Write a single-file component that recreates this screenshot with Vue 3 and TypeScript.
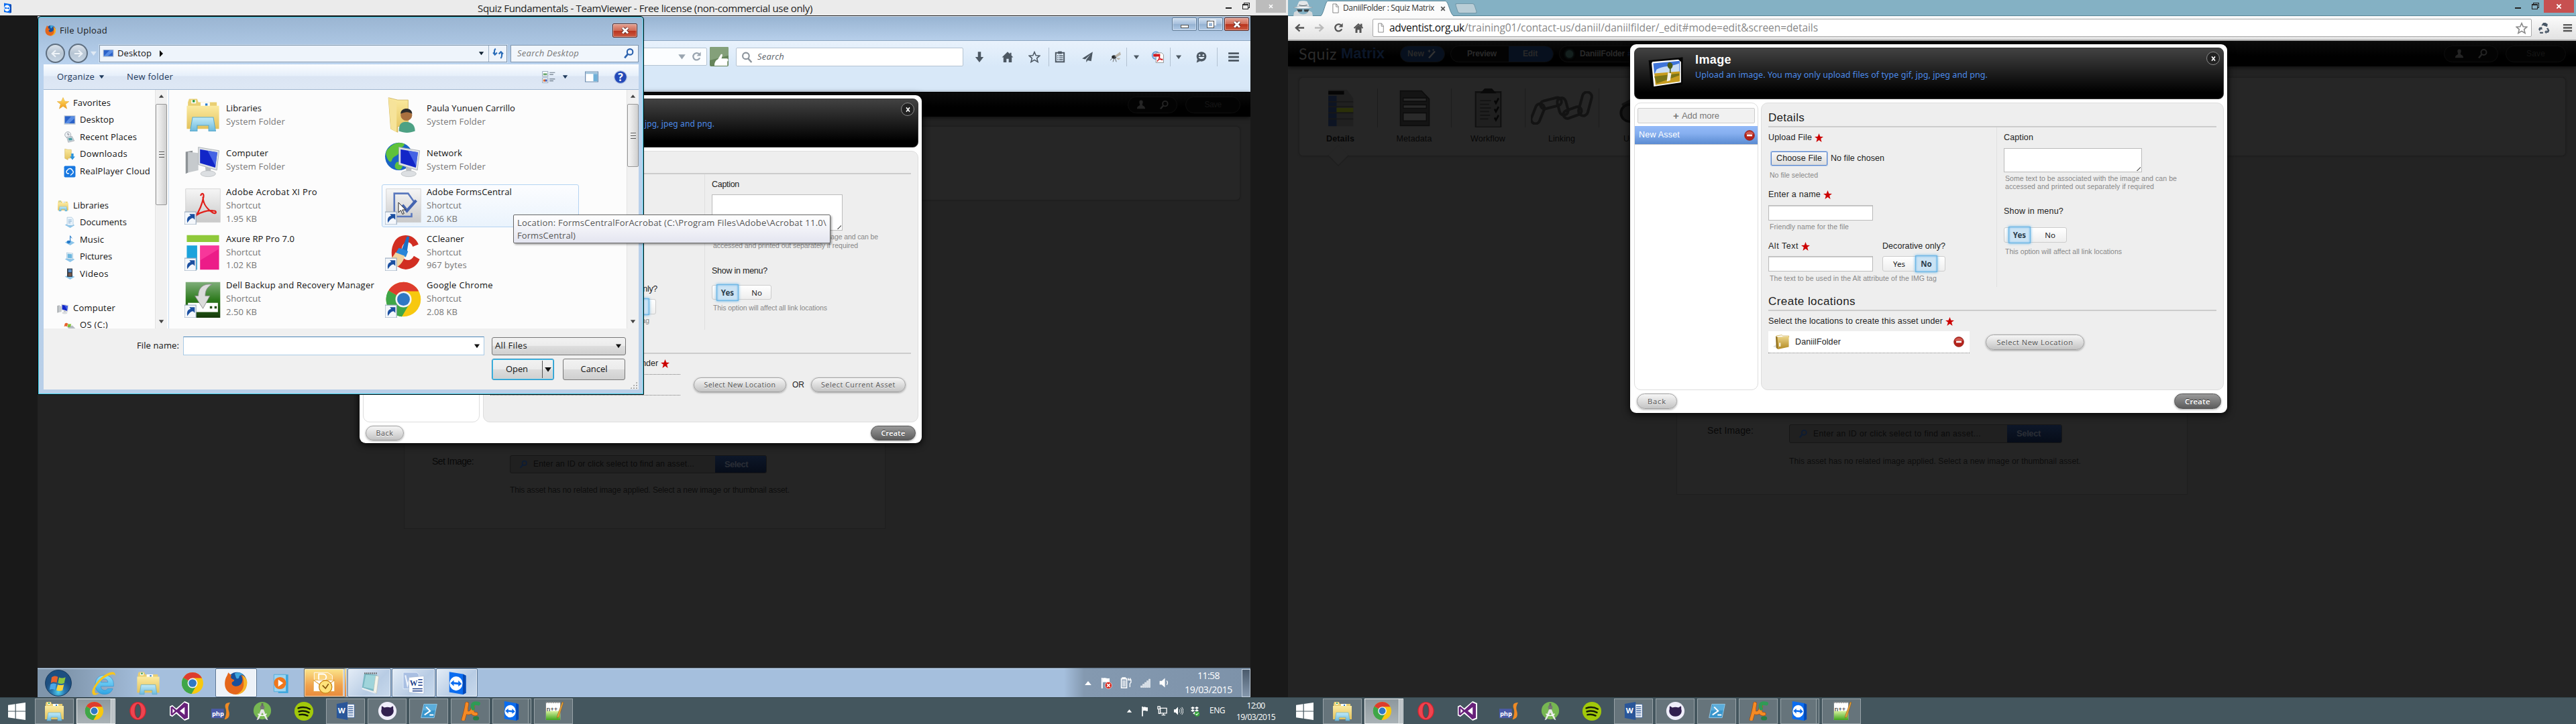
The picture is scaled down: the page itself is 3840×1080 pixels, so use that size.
<script setup lang="ts">
import { h } from 'vue'

const shortcut = '<rect x="0" y="21" width="10" height="11" fill="#f4f7fb" stroke="#8fa3b8" stroke-width=".6"/><path d="M2.500 30.500c-.8-3.600.4-5.800 2.800-6l-1-1.700h4.600v5l-1.500-1.500c-2 .2-3.200 1.500-4.900 4.200z" fill="#1b4fa0"/>'
const chromeArt = '<circle cx="16" cy="16" r="15" fill="#f7c80f"/><path d="M16 16L3 8.500A15 15 0 0 1 29.200 9H16z" fill="#dd3c2e"/><path d="M3 8.500A15 15 0 0 0 14.500 31L20.500 20.500 16 16z" fill="#3fa648"/><path d="M3 8.500L9.500 19.500 16 23l5-3-6.500 11A15 15 0 0 1 3 8.500z" fill="#3fa648"/><circle cx="16" cy="16" r="7" fill="#f4f4f4"/><circle cx="16" cy="16" r="5.500" fill="#2f78c4"/>'
const tvArt = '<path d="M6 1l18 3 4 2v23l-4 2-18-3z" fill="#0a6cf0"/><path d="M24 4l4 2v23l-4 2z" fill="#0549b5"/><ellipse cx="15" cy="16.500" rx="8.500" ry="9.500" fill="#fff"/><path d="M7.500 16l4.500-4v2.700l6 .6V12.500l4.500 4.500-4.500 3.500v-2.500l-6-.6V20z" fill="#0a6cf0"/>'
const explorerArt = '<path d="M3 5l1-3h7l1 3h16v4H3z" fill="#e9cf73"/><path d="M6 3h4v3H6zM14 5h8v4h-8z" fill="#fff"/><path d="M7 3h2v2H7z" fill="#2f9a3c"/><path d="M18 6h2v2h-2z" fill="#2a7fd0"/><path d="M2 8h28v20H2z" fill="url(#gFolder)"/><path d="M7 18h18l2 12h-6v-5H11v5H5z" fill="url(#gAqua)" stroke="#5aa9cd" stroke-width=".6"/>'
const pcScreen = '<path d="M12 5l18 3-2 17-16-5z" fill="#dfe3e6" stroke="#a9adb2" stroke-width=".5"/><path d="M13.500 6.800l15 2.600-1.800 13.300-13.200-4z" fill="#1226c8"/><path d="M20 8l8.500 1.400-1.600 12z" fill="#5b7df0" opacity=".7"/><path d="M18 22l5 1.500-.5 3.500h-4z" fill="#b9bdc1"/><ellipse cx="20.500" cy="28" rx="6.500" ry="2.600" fill="#dcdfe2" stroke="#b3b7bb" stroke-width=".4"/>'
const star = '<path d="M16 0l4.500 11.500L32 12l-9.500 7.200L26 32l-10-7.400L6 32l3.500-12.800L0 12l11.500-.5z" fill="currentColor"/>'
const icons: Record<string, string> = {
  chrome: chromeArt,
  tv: tvArt,
  explorer: explorerArt,
  star,
  ex: '<path d="M7 7l18 18M25 7L7 25" stroke="currentColor" stroke-width="5.500"/>',
  exr: '<path d="M7 6l18 20M25 6L7 26" stroke="#4a2020" stroke-width="11"/><path d="M7 6l18 20M25 6L7 26" stroke="#fff" stroke-width="7"/>',
  fav: '<path d="M16 1l4.500 10 11 .5-9 7 3.500 12L16 24 6 30.500l3.500-12-9-7 11-.5z" fill="url(#gStar)" stroke="#e3a62c" stroke-width="1"/>',
  ff: '<circle cx="17" cy="14.500" r="13" fill="#174f9b"/><path d="M14 3c4-2 9-1 12 2-3-.5-6 1-6 3s-3 3-4 1z" fill="#3fa5dc"/><path d="M4 6c1-2 1-3 2-4 1 2 3 3 4 3-2 3-1 5 2 6 2 .5 2 2 0 3-3 1-2 5 2 6 5 1 9-2 10-6 1-3 0-7-2-9 5 2 9 7 8 13-1 8-7 13-14 13C7 31 1 25 1 17c0-4 1-8 3-11z" fill="#e4661b"/><path d="M24 5c5 3 8 8 6 14-1 7-7 12-14 12 6-2 10-7 10-13 0-5 0-9-2-13z" fill="#f6b42a"/>',
  ie: '<path d="M16.500 6C9.500 6 5 11 5 18s5 12 12 12c5 0 8.500-2.500 10-7h-6.500c-1 1.500-2 2-3.500 2-3 0-5-2-5-5h16C29 11.500 24 6 16.500 6zm-4.400 9c.4-2.600 2-4.200 4.500-4.200s4.200 1.600 4.400 4.200z" fill="url(#gIe)" stroke="#2a8fd0" stroke-width=".5"/><path d="M2 30C-2 26 8 10 20 4c6-3 11-3 10 3-1-3-5-2-9 0C12 11 2 23 5 28c1 1.500 3 1 5 0-3 3-6 4-8 2z" fill="#f8c51c"/>',
  wmp: '<path d="M12 4h14v26l-14 0z" fill="#3aa6de"/><path d="M6 4h17v24H6z" fill="#9bd5f2" stroke="#4aa9d8" stroke-width=".8"/><circle cx="14.500" cy="16" r="8.500" fill="#f0761c"/><path d="M12 11v10l7-5z" fill="#fff"/>',
  outlook: '<path d="M3 2h18l6 4v8H3z" fill="#fbd37c" stroke="#fff" stroke-width=".8"/><path d="M9 4h6a4 4 0 0 1 0 8H9z" fill="none" stroke="#fff" stroke-width="1.600"/><path d="M2 12h28v15H2z" fill="#fff" stroke="#e2a33c" stroke-width=".7"/><path d="M2 12l14 10 14-10" fill="none" stroke="#e2a33c"/><circle cx="18" cy="21" r="8.500" fill="#ffe27a" stroke="#c98516" stroke-width="1.200"/><path d="M14 19l4 4 4-6" fill="none" stroke="#8a5a10" stroke-width="1.600"/>',
  notepad: '<path d="M9 3l17 2-4 22-16-5z" fill="#79b7c2"/><path d="M11 5l14 1-4 18-13-3z" fill="#a9dbe0" opacity=".8"/><path d="M24 6l4 1-3 23-4-3z" fill="#f4f4ea" stroke="#b4b4a4" stroke-width=".4"/><path d="M9 3h17" stroke="#666" stroke-width="2" stroke-dasharray="1.500 1"/><path d="M6 22l16 5 2 3-18-6z" fill="#e9eef0"/>',
  word10: '<path d="M1 1h19l3 3v20H1z" fill="#a9bfe2" stroke="#e6eefa" stroke-width=".8"/><path d="M4 5l3 14 3-9 2 5" fill="none" stroke="#eef3fb" stroke-width="2"/><path d="M9 8l21-2v25L9 29z" fill="#fff" stroke="#9fb3cf" stroke-width=".6"/><text x="10" y="20" font-family="Liberation Serif,serif" font-weight="700" font-size="11" fill="#1d3f8c">W</text><path d="M22 11h6M22 15h6M22 19h6M14 24h14M14 27h14" stroke="#1d3f8c" stroke-width="1.500"/>',
  word13: '<path d="M14 5h16v22H14z" fill="#fff" stroke="#2a5699" stroke-width=".8"/><path d="M20 9h8M20 12h8M20 15h8M20 18h8M20 21h8M20 24h8" stroke="#2a5699" stroke-width="1.300"/><path d="M1 4.500L19 1v30L1 27.500z" fill="#2a5699"/><text x="3" y="20" font-family="Open Sans,sans-serif" font-weight="700" font-size="12.500" fill="#fff">W</text>',
  opera: '<ellipse cx="16" cy="16" rx="13.500" ry="15" fill="#d8222c"/><ellipse cx="16" cy="16" rx="12" ry="13.800" fill="#ef4450"/><ellipse cx="16" cy="16" rx="5" ry="11.500" fill="#44565e" stroke="#b81822"/>',
  vs: '<path d="M24 1l7 3v24l-7 3-13-11-6 5-4-2V9l4-2 6 5z" fill="#fff"/><path d="M23.500 3l5.500 2.300v21.400L23.500 29 11.500 17.500 5 23l-2.500-1.200V10.200L5 9l6.500 5.500zM5.500 12.500v7L9 16zM24 10l-7.500 6 7.500 6z" fill="#68217a" fill-rule="evenodd"/>',
  php: '<path d="M1 12h20v15H1z" fill="#4a5aa8"/><text x="2" y="23" font-family="Open Sans,sans-serif" font-weight="700" font-size="10" fill="#fff">php</text><path d="M31 2c-8 0-9 4-7 10 1.500 5 1 10-2 17 7-1 9-6 7-13-1-4-2-8 2-14z" fill="#f08a24"/>',
  android: '<circle cx="16" cy="15" r="14" fill="#77b752"/><circle cx="16" cy="10" r="3.500" fill="#777"/><path d="M14.500 3h3v5h-3z" fill="#666"/><path d="M14 13L7 30l3-1 6-11 6 11 3 1-7-17z" fill="#e6e6e6"/><path d="M9 20c4 4 10 4 14 0" stroke="#fff" stroke-width="1.500" fill="none"/>',
  spotify: '<circle cx="16" cy="16" r="15" fill="#a2c90a"/><path d="M7 11c6-2 13-1.500 18.500 1.500M8 16.500c5-1.500 11-1 16 1.500M9 21.500c4.500-1 9-.5 13 1.500" stroke="#141a06" stroke-width="2.600" stroke-linecap="round" fill="none"/>',
  github: '<circle cx="16" cy="16" r="15" fill="#efeefa"/><path d="M7 8l4 2.500c3-1 7-1 10 0L25 8c.8 2 .8 3.600.5 4.600C28 18 24 25 16 25S4 18 6.500 12.600C6.200 11.600 6.200 10 7 8z" fill="#31204f"/>',
  ps: '<path d="M7 4h23l-5 24H2z" fill="#3a96cc" stroke="#9fd2f0"/><path d="M9 4h21l-2 11H5z" fill="#7cc3ea" opacity=".5"/><path d="M11 9l7 7-10 7M17 23h7" fill="none" stroke="#fff" stroke-width="2.400"/>',
  mu: '<path d="M10 4C9 12 7 20 4 30M9 13c-2 9 9 9 11-3M20 8c-2 8-2 14 5 13" fill="none" stroke="#a34a0c" stroke-width="6.500" stroke-linecap="round"/><path d="M10 4C9 12 7 20 4 30M9 13c-2 9 9 9 11-3M20 8c-2 8-2 14 5 13" fill="none" stroke="#f58a25" stroke-width="5" stroke-linecap="round"/><path d="M20 12c-3-8 3-10 9-8" fill="none" stroke="#2f9a55" stroke-width="6" stroke-linecap="round"/><ellipse cx="25" cy="28" rx="5" ry="3.500" fill="#2a7d46"/>',
  npp: '<path d="M4 3h22v27H4z" fill="#fff"/><path d="M4 16h22v14H4z" fill="url(#gGreen)"/><path d="M4 3h22" stroke="#999" stroke-width="2" stroke-dasharray="2 1.500"/><text x="5" y="17" font-family="Liberation Sans,sans-serif" font-size="10" fill="#111">n++</text><path d="M29 2l2 1-7 22-3 2 .5-4z" fill="#e8a33a" stroke="#7a4c14" stroke-width=".5"/>',
  win8: '<path d="M0 4.500L13 2.700v12.600H0zM14.500 2.500L32 0v15.300H14.500zM0 16.700h13v12.600L0 27.500zM14.500 16.700H32V32l-17.500-2.500z" fill="#fff"/>',
  orb: '<circle cx="16" cy="16" r="15.500" fill="url(#gOrb)" stroke="#16395c" stroke-width=".8"/><path d="M8 9c3-2 5-1.500 7.500-.5L14 15.500C11.500 14.500 9.500 14.500 7 16z" fill="#e8622b"/><path d="M16.800 9.200c2.700 1.200 5 1 7.700-.2L23 16c-2.600 1.200-5 1-7.500 0z" fill="#8cc63e"/><path d="M6.600 17.500c2.500-1.500 4.600-1.300 7-.4L12 24c-2.300-1-4.300-1-6.500 0z" fill="#4ba7e8"/><path d="M15.200 17.700c2.600 1 4.700 1.100 7.400 0L21 24.500c-2.600 1.200-5 1-7.400 0z" fill="#fbd33c"/>',
  libraries: explorerArt,
  user: '<path d="M3 1l8 2h9v22l-9 1v5l-6-3z" fill="url(#gFolder)" stroke="#cdb25e" stroke-width=".5"/><path d="M3 1l7 4v26l-5-3z" fill="#f6e39a"/><circle cx="18.500" cy="16" r="5" fill="#a9703f"/><path d="M13.500 15c0-6 10-6 10 0-3-2-6-2-10 0z" fill="#2c2c2c"/><path d="M12 30c0-6 2-8 6-8s8 2 8 8c-5 1.800-9 1.800-14 0z" fill="#4da184"/>',
  computer: '<path d="M1 9l6-1v17l-6 3z" fill="#8d9296"/><path d="M3 9l9 1v15l-9 2z" fill="#c6cacd"/>' + pcScreen,
  network: '<circle cx="12" cy="13" r="12" fill="#1a63c4"/><path d="M5 4c5-4 9-3 12-2-1 4-5 3-5 7s-5 3-6 7-4 0-5-4 2-6 4-8zM10 18c3-1 6 1 5 4s-3 3-5 2-2-4 0-6z" fill="#5fc23b"/>' + pcScreen,
  acrobat: '<path d="M1 1h30v29H1z" fill="url(#gPaper)" stroke="#d0d0d0" stroke-width=".5"/><path d="M14 7c1-3 3-2 2.500 1C15.500 14 13 20 9 26M16 8c0 6 4 11 9 14 3 1 3-2 0-2-5-.5-11 1-15 4" stroke="#e0201b" stroke-width="1.300" fill="none"/>' + shortcut,
  forms: '<path d="M1 1h30v29H1z" fill="url(#gPaper)" stroke="#d0d0d0" stroke-width=".5"/><path d="M8 23V5h12l5 7M9 25h14v-3" stroke="#5a78bd" stroke-width="1.500" fill="none"/><path d="M15 15l4 5 8-9" stroke="#4565b0" stroke-width="2.500" fill="none"/>' + shortcut,
  axure: '<path d="M2 1h28v6H2z" fill="#8fc93a"/><path d="M2 10h9v21H2z" fill="#1ba3dc"/><path d="M13.500 10H30v21H13.500z" fill="#ec1c88"/><path d="M13.500 10H30v3l-16.500 10z" fill="#ff4aa6" opacity=".6"/>' + shortcut,
  ccleaner: '<path d="M29 9C25-1 12-1 8 7c-4 7-3 18 4 22 6 4 15 1 18-7l-5-3c-2 4-6 5-9 2-3-4-2-11 1-13 3-2 6 0 7 3z" fill="#d12e22"/><path d="M19 2l2 .5-2 13-5-1z" fill="#1a6fc4"/><path d="M12 12l8 3-2 5-9-3z" fill="#2a86d8"/><path d="M9 16l8 3c-1 6-6 10-10 11L1 24c4-2 6-4 8-8z" fill="#f0d3a0"/>' + shortcut,
  dell: '<path d="M1 1h30v31H1z" fill="url(#gDell)"/><path d="M3 19h26v8H3z" fill="#fff"/><path d="M22 22h2v2h-2zM26 22h2v2h-2z" fill="#234d10"/><path d="M24 3c-8-1-12 3-12 10H9l7 11 6-11h-4c0-5 2-8 6-10z" fill="#dcdcdc" stroke="#8b8b8b" stroke-width=".5"/>' + shortcut,
  gchrome: chromeArt + shortcut,
  desktopS: '<path d="M1 4h30v24H1z" fill="#bfc9d4"/><path d="M3 6h26v19H3z" fill="#2a62c9"/><path d="M3 25L20 6h9v5L14 25z" fill="#6ea0ef" opacity=".7"/>',
  recent: '<circle cx="11" cy="9" r="8" fill="#eef1f4" stroke="#9aa4ad" stroke-width="1.500"/><path d="M11 4v5h4" stroke="#667" stroke-width="1.500" fill="none"/><path d="M8 15l14-2 6 12-16 4z" fill="#c9d2da" stroke="#8b949c"/><path d="M12 18l9-1 2 6-9 1z" fill="#4d9ea5"/>',
  down: '<path d="M3 2l8 2h9v22l-9 1v4l-8-4z" fill="url(#gFolder)" stroke="#cdb25e"/><path d="M20 14h6v8h4l-7 9-7-9h4z" fill="#2a93dd"/>',
  real: '<rect x="1" y="1" width="30" height="30" rx="3" fill="#1878e0"/><path d="M14 21h-4a5 5 0 0 1 0-9 7 7 0 0 1 13 1 5 5 0 0 1-1 9l-4 4" stroke="#fff" stroke-width="2.500" fill="none"/>',
  doc: '<path d="M3 22l14-5 12 6-12 7z" fill="#8cc5ea"/><path d="M9 2h12l4 5v17l-16-1z" fill="#e9f3fb" stroke="#8fb4cf"/><path d="M12 9h9M12 13h9M12 17h6" stroke="#6fa0c8" stroke-width="1.500"/>',
  music: '<path d="M3 22l14-5 12 6-12 7z" fill="#8cc5ea"/><path d="M16 2c1 5 7 5 6 11-1-3-3-4-4-4v12a5 4 0 1 1-2-3z" fill="#2479c9"/>',
  pic: '<path d="M3 22l14-5 12 6-12 7z" fill="#8cc5ea"/><path d="M8 5l16 2v16L8 21z" fill="#eaf5fc" stroke="#8fb4cf"/><path d="M10 8l12 1.500v11L10 19z" fill="#6db6de"/>',
  vid: '<path d="M3 22l14-5 12 6-12 7z" fill="#8cc5ea"/><path d="M9 1h14v22H9z" fill="#2c3540"/><path d="M12 3h9v8h-9z" fill="#5a8fc9"/><path d="M12 13h9v8h-9z" fill="#7a5a4a"/>',
  drive: '<path d="M9 20l14-3 8 8-14 6z" fill="#b5bcc2"/><path d="M3 12c3-3 6-2 8 0l-2 8c-3-2-5-2-8 0z" fill="#e8622b"/><path d="M12 12c3 2 6 2 8 0l-2 8c-3 2-6 2-8 0z" fill="#7fbf3a"/>',
  search: '<circle cx="19" cy="12" r="8" fill="none" stroke="currentColor" stroke-width="4"/><path d="M13 18L4 29" stroke="currentColor" stroke-width="5"/>',
  searchL: '<circle cx="13" cy="12" r="9" fill="none" stroke="currentColor" stroke-width="4"/><path d="M19 19l10 11" stroke="currentColor" stroke-width="4.500"/>',
  refresh: '<path d="M9 3C5 6 5 12 6 18M2 14l5 6 6-6" fill="none" stroke="#2a6cb8" stroke-width="4"/><path d="M23 30c4-3 4-9 3-15M18 18l6-6 6 6" fill="none" stroke="#2a6cb8" stroke-width="4"/>',
  views: '<path d="M1 1h13v13H1zM1 18h13v13H1z" fill="#fff" stroke="#8aa0b4" stroke-width="1.500"/><path d="M3 6h9v5H3z" fill="#69a66f"/><path d="M3 22h5v6H3z" fill="#d06a3a"/><path d="M8 22h4v6H8z" fill="#3a5ec0"/><path d="M18 4h13M18 9h9M18 21h13M18 26h9" stroke="#6c7a88" stroke-width="2"/>',
  pane: '<path d="M1 2h30v28H1z" fill="#fff" stroke="#6f8db0" stroke-width="2"/><path d="M2 3h28v5H2z" fill="#9fc3dc"/><path d="M20 8h10v21H20z" fill="#6fb0d8"/>',
  help: '<circle cx="16" cy="16" r="15" fill="#2349b8" stroke="#b8c6e4" stroke-width="2"/><text x="16" y="25" text-anchor="middle" font-family="Open Sans,sans-serif" font-weight="700" font-size="25" fill="#fff">?</text>',
  dl: '<path d="M12 2h8v14h7L16 30 5 16h7z" fill="#4d5863"/>',
  home: '<path d="M16 2L1 17h4v13h8v-9h6v9h8V17h4l-5-5V5h-4v3z" fill="#4d5863"/>',
  staro: '<path d="M16 3l4 9 10 .8-7.500 6.500 2.500 10-9-5.500-9 5.500 2.500-10L2 12.800 12 12z" fill="none" stroke="currentColor" stroke-width="2.800"/>',
  clip: '<path d="M5 5h22v24H5z" fill="none" stroke="#4d5863" stroke-width="3.500"/><path d="M11 1h10v7H11z" fill="#4d5863"/><path d="M9 13h3M9 18h3M9 23h3M14 13h10M14 18h10M14 23h10" stroke="#4d5863" stroke-width="2.500"/>',
  send: '<path d="M30 2L2 20l8 2L24 9 13 23v7l4-5 9 2z" fill="#4d5863"/>',
  fly: '<ellipse cx="12" cy="16" rx="6" ry="5" fill="#3d4247"/><path d="M14 13L28 2l2 8-12 7zM16 18l13 1-5 5z" fill="#b9b3a8"/><path d="M8 18l-6 7M12 20l-3 9M15 20l3 9" stroke="#555" stroke-width="1.500"/><circle cx="9" cy="16" r="3" fill="#222"/>',
  pdf: '<circle cx="11" cy="12" r="10" fill="#b8d6f2" stroke="#4f8fd0" stroke-width="2"/><path d="M11 5h15l5 5v21H11z" fill="#fff" stroke="#777" stroke-width="1.300"/><path d="M4 8h18v7H4z" fill="#d3171c"/><path d="M20 13c0 7-3 12-6 15M20 15c1 6 5 9 9 9M14 26c5-4 10-5 15-4" fill="none" stroke="#d3171c" stroke-width="2"/>',
  chat: '<circle cx="16" cy="15" r="13" fill="#4d5863"/><path d="M5 22l-2 9 9-4z" fill="#4d5863"/><circle cx="11" cy="11" r="2.200" fill="#e4effa"/><circle cx="21" cy="11" r="2.200" fill="#e4effa"/><path d="M8 16c2 7 14 7 16 0z" fill="#e4effa"/>',
  menu: '<path d="M2 4h28v5H2zM2 13.500h28v5H2zM2 23h28v5H2z" fill="currentColor"/>',
  person: '<path d="M16 1c5 0 7 4 6 8-.5 3-2 5-2 7 0 5 10 4 10 14H2c0-10 10-9 10-14 0-2-1.500-4-2-7-1-4 1-8 6-8z" fill="currentColor"/>',
  flag: '<path d="M6 2v29" stroke="#fff" stroke-width="3.500"/><path d="M8 4c6-3 8 2 14 0v11c-6 2-8-3-14 0z" fill="#fff"/>',
  flagx: '<path d="M5 2v28" stroke="#fff" stroke-width="3.500"/><path d="M7 3c7-2 9 2 18 0v11c-8 2-10-2-18 0z" fill="#fff"/><circle cx="22" cy="22" r="9" fill="#d8261c" stroke="#fff"/><path d="M18 18l8 8M26 18l-8 8" stroke="#fff" stroke-width="2.800"/>',
  batt: '<path d="M6 5h12v25H3V5h3V2h8v3" fill="none" stroke="#fff" stroke-width="3"/><path d="M6 9h9v18H6z" fill="#fff" opacity=".6"/><path d="M21 8h9v7l-3 3v10M23 3v6M28 3v6" stroke="#fff" stroke-width="2.500" fill="none"/>',
  sig: '<path d="M3 24h4v5H3zM9 19h4v10H9zM15 14h4v15h-4zM21 9h4v20h-4zM27 4h4v25h-4z" fill="#d6dee7" stroke="#fff" stroke-width="1"/>',
  snd: '<path d="M3 11h6l9-8v26l-9-8H3z" fill="#fff"/><path d="M23 10c3 4 3 8 0 12" stroke="#fff" stroke-width="2.500" fill="none"/>',
  snd2: '<path d="M2 11h5l8-8v26l-8-8H2z" fill="#fff"/><path d="M19 11c2.500 3 2.500 7 0 10M23 7c5 5 5 13 0 18M27 4c6 7 6 17 0 24" stroke="#fff" stroke-width="2" fill="none"/>',
  net: '<path d="M10 7h20v16H10zM14 29h12M20 23v6M2 2h7v8H2zM5 10v14h5" fill="none" stroke="#fff" stroke-width="2.800"/>',
  drop: '<path d="M10 2l6 4-6 4-6-4zM22 2l6 4-6 4-6-4zM10 10l6 4-6 4-6-4zM22 10l6 4-6 4-6-4zM16 18l6 4-6 4-6-4z" fill="#fff"/><circle cx="23" cy="24" r="7.500" fill="#35a53b"/><path d="M19 24l3 3 5-6" stroke="#fff" stroke-width="2.300" fill="none"/>',
  spy: '<path d="M10 2c3-2 9-2 12 0l3 10H7z" fill="#e3e6e8"/><path d="M2 14c8-3 20-3 28 0-8 3-20 3-28 0z" fill="#f4f5f6" stroke="#8b989f" stroke-width=".6"/><path d="M10 9c4 2 8 2 12 0" stroke="#59656b" stroke-width="1.500" fill="none"/><path d="M8 20c1 7 5 8 8 8s7-1 8-8l5 4 1 8H2l1-8z" fill="#d3d8db"/><path d="M7 18h8l-1 5h-5zM17 18h8l-2 5h-5z" fill="#3a4246"/>',
  page: '<path d="M5 2h14l8 8v20H5z" fill="#fff" stroke="#777" stroke-width="2"/><path d="M18 2v9h9" fill="none" stroke="#777" stroke-width="2"/>',
  back: '<path d="M30 16H5M16 5L4 16l12 11" fill="none" stroke="currentColor" stroke-width="5"/>',
  fwd: '<path d="M2 16h25M16 5l12 11-12 11" fill="none" stroke="currentColor" stroke-width="5"/>',
  reload: '<path d="M26 20A11 11 0 1 1 24 8" fill="none" stroke="currentColor" stroke-width="5"/><path d="M29 1v13H16z" fill="currentColor"/>',
  homec: '<path d="M3 16L16 4l13 12" fill="none" stroke="#555" stroke-width="4"/><path d="M22 3h5v10h-5zM7 15l9-8 9 8v15h-6v-9h-6v9H7z" fill="#555"/>',
  recycle: '<path d="M11 9l4-6h5l4 6M20 3l5 3-1 5-6-2z" fill="#4a5867" stroke="#4a5867" stroke-width="2.500"/><path d="M4 14l7-1 1 7-4-1-3 5-3-5zM5 26h9v4H6zM27 15l4 7-3 6h-5v3l-5-5 5-5v3h2l1-3-3-4z" fill="#4a5867"/>',
  minus: '<circle cx="16" cy="16" r="15" fill="#b3231c" stroke="#7e1a14"/><path d="M4 12a13 13 0 0 1 24 0c-7 3-17 3-24 0z" fill="#cf5a50"/><path d="M8 13.500h16v5H8z" fill="#fff"/>',
  photo: '<path d="M1 4l30-3v27L3 32z" fill="#050505"/><path d="M3.500 5.500l26-2.500v23L5.500 30z" fill="#fff"/><path d="M5 7l23.500-2.500v12L6 18z" fill="#3f74d8"/><path d="M8 13c6-4 12-2 20-6v9L6 18z" fill="#c9dcf4"/><path d="M6 17l22.500-2v10L7 28.500z" fill="#c79c1f"/><path d="M6 20l22-3v2L8 27z" fill="#7c7416"/><path d="M19 6c4 0 4 5 1.500 6.500V17h-1v-4.500C17 11 17 7 19 6z" fill="#4d5a12"/><path d="M18 16l3 1-1 7-3 1z" fill="#f2efe4"/><path d="M1 4h4l-3 6zM31 1v6l-5-5z" fill="#050505"/>',
  gold: '<path d="M0 26l8-6 2 10z" fill="#ddd"/><path d="M6 3l10-2 2 2 11 0v3H6z" fill="#fff" stroke="#c9a53c"/><path d="M5 4l4 2v26l-3-3z" fill="#8f6c18"/><path d="M8 6l21-2v23L9 32z" fill="url(#gGold)"/><path d="M11 18h3v8h-3z" fill="#f4efdd"/>',
  wand: '<path d="M6 29L24 9" stroke="#333" stroke-width="5"/><path d="M7 3l1.500 4 4 1-4 1.500L7 14l-1.500-4.500-4-1.500 4-1zM19 1l1 3 3 1-3 1-1 3-1-3-3-1 3-1z" fill="#333"/>',
  pgDetails: '<path d="M3 1h20l7 7v23H3z" fill="#202020"/><path d="M3 2h17v3H3z" fill="#050505"/><path d="M3 6h9v25H3z" fill="#0d1423"/><path d="M12 16h18v4H12z" fill="#2b3008"/><path d="M3 11h27M3 15h27M3 20h27M3 25h27" stroke="#171717"/>',
  pgMeta: '<path d="M1 1h22l8 7v23H1z" fill="#141414" stroke="#0d0d0d"/><path d="M4 7h24v3H4zM4 13h24v3H4zM4 20h24v7H4z" fill="#2a2a2a" stroke="#0d0d0d"/>',
  pgFlow: '<path d="M2 3h28v29H2z" fill="#1f1f1f" stroke="#101010" stroke-width="1.500"/><path d="M7 4l5-4h8l5 4z" fill="#090909"/><path d="M7 10h12M7 13h10M7 16h12M7 19h10M7 22h11M7 25h9" stroke="#131313"/><path d="M23 10l1.500 2 3-4M23 17l1.500 2 3-4M23 24l1.500 2 3-4" stroke="#060606" stroke-width="1.800" fill="none"/>',
  pgBin: '<path d="M2 12L20 2l12 3v24L12 30z" fill="#131313"/><circle cx="10" cy="21" r="8.500" fill="#171717" stroke="#0a0a0a" stroke-width="2.500"/>',
  tri: '<path d="M3 8h26L16 26z" fill="currentColor"/>',
  triUp: '<path d="M3 24h26L16 8z" fill="currentColor"/>',
  hand: '<path d="M0 0h32v32H0z" fill="#65845a"/><path d="M0 0h32v14L0 22z" fill="#84a07a"/><path d="M8 31c0-6 2-9 6-11l5-8c3-1 3 1 2 4l-1 3h9c3 0 3 4 1 5v7z" fill="#fff"/>',
}
const Ico = (p: { n: string; s?: number; w?: number; h?: number }) =>
  h('svg', {
    viewBox: '0 0 32 32', width: p.w ?? p.s ?? 16, height: p.h ?? p.s ?? 16,
    preserveAspectRatio: 'none', innerHTML: icons[p.n], style: 'flex:none;display:block',
  })
Ico.props = ['n', 's', 'w', 'h']

// Tracks a label out (or in) to the width of its slot.
const vFit = {
  mounted(el: HTMLElement, b: { value: number }) {
    const r = document.createRange()
    r.selectNodeContents(el)
    const n = (el.textContent ?? '').length
    el.style.letterSpacing = `${(b.value - r.getBoundingClientRect().width) / n}px`
  },
}

const nav = [
  { t: 'Favorites', i: 'fav', w: 56, top: true }, { t: 'Desktop', i: 'desktopS', w: 51 },
  { t: 'Recent Places', i: 'recent', w: 85 }, { t: 'Downloads', i: 'down', w: 71 },
  { t: 'RealPlayer Cloud', i: 'real', w: 105 }, { t: '', i: '', w: 0 },
  { t: 'Libraries', i: 'libraries', w: 53, top: true }, { t: 'Documents', i: 'doc', w: 70 },
  { t: 'Music', i: 'music', w: 36 }, { t: 'Pictures', i: 'pic', w: 48 }, { t: 'Videos', i: 'vid', w: 43 },
  { t: '', i: '', w: 0 }, { t: 'Computer', i: 'computer', w: 63, top: true }, { t: 'OS (C:)', i: 'drive', w: 42 },
]
const files = [
  { i: 'libraries', l: [['Libraries', 53], ['System Folder', 88]] },
  { i: 'user', l: [['Paula Yunuen Carrillo', 132], ['System Folder', 88]] },
  { i: 'computer', l: [['Computer', 63], ['System Folder', 88]] },
  { i: 'network', l: [['Network', 53], ['System Folder', 88]] },
  { i: 'acrobat', l: [['Adobe Acrobat XI Pro', 136], ['Shortcut', 52], ['1.95 KB', 46]] },
  { i: 'forms', hot: true, l: [['Adobe FormsCentral', 127], ['Shortcut', 52], ['2.06 KB', 46]] },
  { i: 'axure', l: [['Axure RP Pro 7.0', 102], ['Shortcut', 52], ['1.02 KB', 46]] },
  { i: 'ccleaner', l: [['CCleaner', 56], ['Shortcut', 52], ['967 bytes', 60]] },
  { i: 'dell', l: [['Dell Backup and Recovery Manager', 221], ['Shortcut', 52], ['2.50 KB', 46]] },
  { i: 'gchrome', l: [['Google Chrome', 99], ['Shortcut', 52], ['2.08 KB', 46]] },
] as { i: string; hot?: boolean; l: [string, number][] }[]
const ffTools = [
  { n: 'dl', w: 48 }, { n: 'home', w: 36 }, { n: 'staro', w: 44, s: 1 }, { n: 'clip', w: 31 }, { n: 'send', w: 52 },
  { n: 'fly', w: 33, s: 1 }, { n: 'tri', w: 27, z: 10 }, { n: 'pdf', w: 38, s: 1 }, { n: 'tri', w: 23, z: 10 },
  { n: 'chat', w: 47, s: 1 }, { n: 'menu', w: 48 },
]
const w7 = [
  { n: 'ie', w: 66, z: 38 }, { n: 'explorer', w: 65, z: 38 }, { n: 'chrome', w: 68, z: 34 },
  { n: 'ff', w: 62, z: 36, on: true }, { n: 'wmp', w: 69, z: 34 }, { n: 'outlook', w: 65, z: 36, hot: true },
  { n: 'notepad', w: 65, z: 36, on: true }, { n: 'word10', w: 65, z: 34, on: true }, { n: 'tv', w: 62, z: 36, on: true },
]
const w8 = [
  { n: 'explorer', c: 'run', z: 32 }, { n: 'chrome', c: 'act', z: 29 }, { n: 'opera', z: 29 }, { n: 'vs', z: 31 },
  { n: 'php', z: 30 }, { n: 'android', z: 30 }, { n: 'spotify', z: 30 }, { n: 'word13', c: 'run', z: 29 },
  { n: 'github', c: 'run', z: 29 }, { n: 'ps', c: 'run', z: 27 }, { n: 'mu', c: 'run', z: 29 },
  { n: 'tv', c: 'run dbl', z: 31 }, { n: 'npp', c: 'run', z: 31 },
]
const tabs = [
  { n: 'pgDetails', t: 'Details', w: 42, iw: 44, ih: 58 }, { n: 'pgMeta', t: 'Metadata', w: 53, iw: 46, ih: 55 },
  { n: 'pgFlow', t: 'Workflow', w: 52, iw: 43, ih: 58 }, { n: 'chain', t: 'Linking', w: 40, iw: 94, ih: 50 },
  { n: 'pgBin', t: 'Usage', w: 36, iw: 50, ih: 48 },
]
</script>

<template>
  <div class="desk">
    <svg width="0" height="0" class="defs">
      <defs>
        <linearGradient id="gFolder" x2="0" y2="1"><stop offset="0" stop-color="#fbeaa0" /><stop offset="1" stop-color="#e3c25c" /></linearGradient>
        <linearGradient id="gAqua" x2="0" y2="1"><stop offset="0" stop-color="#c2ebf8" /><stop offset="1" stop-color="#6cb9dc" /></linearGradient>
        <linearGradient id="gStar" x2="0" y2="1"><stop offset="0" stop-color="#ffe26a" /><stop offset="1" stop-color="#f09a1c" /></linearGradient>
        <linearGradient id="gIe" x2="0" y2="1"><stop offset="0" stop-color="#8fe0fb" /><stop offset="1" stop-color="#2fa4e4" /></linearGradient>
        <linearGradient id="gGreen" x2="0" y2="1"><stop offset="0" stop-color="#d8f2a0" /><stop offset="1" stop-color="#3fa51c" /></linearGradient>
        <linearGradient id="gPaper" x2="0" y2="1"><stop offset="0" stop-color="#f6f6f6" /><stop offset="1" stop-color="#c9c9c9" /></linearGradient>
        <linearGradient id="gDell" x2="0" y2="1"><stop offset="0" stop-color="#7fae7a" /><stop offset=".5" stop-color="#2d7a1c" /><stop offset="1" stop-color="#173a0c" /></linearGradient>
        <linearGradient id="gGold" x2="0" y2="1"><stop offset="0" stop-color="#ecd58a" /><stop offset="1" stop-color="#b28a22" /></linearGradient>
        <radialGradient id="gOrb" cy=".85"><stop offset="0" stop-color="#4fd0ee" /><stop offset=".5" stop-color="#2a76ae" /><stop offset="1" stop-color="#1d4f80" /></radialGradient>
      </defs>
    </svg>

    <section class="monitor">
      <header class="tvbar">
        <Ico n="tv" :s="16" />
        <span v-fit="499">Squiz Fundamentals - TeamViewer - Free license (non-commercial use only)</span>
        <div class="tvbtns"><i class="min" /><i class="rest" /><b><Ico n="ex" :s="9" /></b></div>
      </header>

      <div class="remote">
        <div class="fftitle">
          <i class="wbtn"><u class="m" /></i><i class="wbtn"><u class="r" /></i><i class="wbtn red"><Ico n="exr" :w="14" :h="13" /></i>
        </div>
        <div class="fftools">
          <div class="url"><Ico n="tri" :s="13" /><Ico n="reload" :s="15" /></div>
          <div class="green"><Ico n="hand" :w="28" :h="29" /></div>
          <div class="ffsearch"><Ico n="searchL" :s="17" /><em v-fit="40">Search</em></div>
          <div v-for="(t, k) in ffTools" :key="k" class="fft" :class="{ sep: t.s }" :style="{ width: t.w + 'px' }"><Ico :n="t.n" :s="t.z || 18" /></div>
        </div>
        <div class="page">
          <div class="pbar pbarL">
            <div class="pill pic"><Ico n="person" :s="14" /><Ico n="search" :s="15" /></div>
            <div class="pill save"><span v-fit="25">Save</span></div>
          </div>
          <div class="panelTop" />
          <div class="setimg sL">
            <label v-fit="62">Set Image:</label>
            <div>
              <div class="pick"><Ico n="search" :s="13" /><span v-fit="240">Enter an ID or click select to find an asset...</span><b><span v-fit="35">Select</span></b></div>
              <p v-fit="417">This asset has no related image applied. Select a new image or thumbnail asset.</p>
            </div>
          </div>
        </div>

        <div class="w7bar">
          <div class="orb"><Ico n="orb" :s="40" /></div>
          <div v-for="t in w7" :key="t.n" class="w7c" :class="{ on: t.on, hot: t.hot }" :style="{ width: t.w + 'px' }"><Ico :n="t.n" :s="t.z" /></div>
          <div class="w7tray">
            <Ico n="triUp" :s="12" /><Ico n="flagx" :s="18" /><Ico n="batt" :s="17" /><Ico n="sig" :s="16" /><Ico n="snd" :s="17" />
            <div class="clock"><span v-fit="33">11:58</span><span v-fit="71">19/03/2015</span></div>
            <i class="peek" />
          </div>
        </div>

        <div class="dlg dlgL">
          <div class="dhead">
            <div class="dtxt"><p v-fit="422">Upload an image. You may only upload files of type gif, jpg, jpeg and png.</p></div>
            <span class="x"><Ico n="ex" :w="9" :h="11" /></span>
          </div>
          <div class="dbody">
            <aside />
            <main>
              <h2 />
              <div class="cols">
                <div class="c1">
                  <label class="deco"><span v-fit="88">Decorative only?</span></label>
                  <div class="tog"><span>Yes</span><b>No</b></div>
                  <small v-fit="235">The text to be used in the Alt attribute of the IMG tag</small>
                </div>
                <div class="c2">
                  <label><span v-fit="41">Caption</span></label>
                  <div class="area"><i class="rs" /></div>
                  <small class="ln f"><span v-fit="246">Some text to be associated with the image and can be</span></small>
                  <small class="ln"><span v-fit="216">accessed and printed out separately if required</span></small>
                  <label class="sm"><span v-fit="83">Show in menu?</span></label>
                  <div class="tog y"><b>Yes</b><span>No</span></div>
                  <small v-fit="170">This option will affect all link locations</small>
                </div>
              </div>
              <h2 class="h2b" />
              <label class="loc"><span v-fit="250">Select the locations to create this asset under</span><Ico n="star" :s="13" class="req" /></label>
              <div class="lrow"><div class="lbox" /><button><span v-fit="107">Select New Location</span></button><span v-fit="18" class="or">OR</span><button class="cur"><span v-fit="111">Select Current Asset</span></button></div>
            </main>
          </div>
          <footer><button><span v-fit="26">Back</span></button><button class="dark"><span v-fit="36">Create</span></button></footer>
        </div>

        <div class="fd">
          <div class="fdt"><Ico n="ff" :s="17" /><span v-fit="71">File Upload</span><i class="fx"><Ico n="exr" :w="14" :h="13" /></i></div>
          <div class="fda">
            <i class="nb"><Ico n="back" :s="14" /></i><i class="nb"><Ico n="fwd" :s="14" /></i><Ico n="tri" :s="11" class="nd" />
            <div class="addr"><Ico n="desktopS" :w="17" :h="15" /><span v-fit="51">Desktop</span><i class="ar" /><Ico n="tri" :s="9" class="dn" /><div class="rf"><Ico n="refresh" :s="17" /></div></div>
            <div class="fs"><em v-fit="92">Search Desktop</em><Ico n="search" :s="17" /></div>
          </div>
          <div class="fdc">
            <span v-fit="56">Organize</span><Ico n="tri" :s="9" /><span class="nf" v-fit="69">New folder</span>
            <div class="fdr"><Ico n="views" :w="20" :h="18" /><Ico n="tri" :s="9" /><Ico n="pane" :w="20" :h="17" /><Ico n="help" :s="20" /></div>
          </div>
          <div class="fdb">
            <div class="nav"><div v-for="(r, k) in nav" :key="k" class="nr" :class="{ top: r.top }"><template v-if="r.t"><Ico :n="r.i" :s="18" /><span v-fit="r.w">{{ r.t }}</span></template></div></div>
            <div class="sb s1"><Ico n="triUp" :s="9" /><i /><Ico n="tri" :s="9" /></div>
            <div class="files">
              <div v-for="f in files" :key="f.l[0][0]" class="file" :class="{ hot: f.hot }"><Ico :n="f.i" :w="55" :h="55" /><div><p v-for="l in f.l" :key="l[0]"><span v-fit="l[1]">{{ l[0] }}</span></p></div></div>
            </div>
            <div class="sb s2"><Ico n="triUp" :s="9" /><i /><Ico n="tri" :s="9" /></div>
          </div>
          <div class="fdf">
            <div class="r1"><span v-fit="63">File name:</span><div class="fn"><Ico n="tri" :s="10" /></div><div class="ft"><span v-fit="48">All Files</span><Ico n="tri" :s="10" /></div></div>
            <div class="r2"><div class="open"><span v-fit="33">Open</span><i><Ico n="tri" :s="12" /></i></div><div class="can"><span v-fit="40">Cancel</span></div></div>
          </div>
          <i class="grip" />
          <svg class="cursor" width="12" height="20" viewBox="0 0 12 20"><path d="M1 1v15l3.500-3.300L7 18.500l2.300-1-2.500-5.500H11.500z" fill="#fff" stroke="#222" /></svg>
        </div>
        <div class="tip"><span v-fit="461">Location: FormsCentralForAcrobat (C:\Program Files\Adobe\Acrobat 11.0\</span><br><span v-fit="87">FormsCentral)</span></div>
      </div>

      <div class="w8bar">
        <div class="win"><Ico n="win8" :w="26" :h="26" /></div>
        <div v-for="t in w8" :key="t.n" class="w8c" :class="t.c"><Ico :n="t.n" :s="t.z" /></div>
        <div class="tray">
          <Ico n="triUp" :s="9" class="up" /><Ico n="flag" :s="16" /><Ico n="net" :s="15" /><Ico n="snd2" :s="15" /><Ico n="drop" :s="16" />
          <span v-fit="23">ENG</span>
          <div class="clock"><span v-fit="27">12:00</span><span v-fit="58">19/03/2015</span></div>
        </div>
      </div>
    </section>

    <section class="monitor">
      <div class="tabs">
        <Ico n="spy" :w="33" :h="23" class="spy" />
        <div class="tab">
          <svg class="tabbg" width="202" height="24" viewBox="0 0 202 24"><path d="M0 24.500C5 22 7 4 11 1.500h176c5 2 6 20 13 23z" fill="#fbfbfb" stroke="#5b8798" /></svg>
          <Ico n="page" :w="12" :h="15" /><span v-fit="136">DaniilFolder : Squiz Matrix</span><Ico n="ex" :s="10" class="tx" />
        </div>
        <i class="newtab" />
        <div class="cb"><i class="min" /><i class="rest" /><b><Ico n="ex" :s="11" /></b></div>
      </div>
      <div class="ctools">
        <Ico n="back" :s="15" class="d" /><Ico n="fwd" :s="15" class="l" /><Ico n="reload" :s="15" class="d" /><Ico n="homec" :s="16" />
        <div class="omni"><Ico n="page" :w="11" :h="15" /><span class="dom" v-fit="112">adventist.org.uk</span><span v-fit="527">/training01/contact-us/daniil/daniilfilder/_edit#mode=edit&amp;screen=details</span><Ico n="staro" :s="18" class="bk" /></div>
        <Ico n="recycle" :s="18" /><Ico n="menu" :w="15" :h="15" class="mn" />
      </div>
      <div class="page pR">
        <div class="pbar">
          <span class="sq" v-fit="57">Squiz</span><span class="mx" v-fit="65">Matrix</span>
          <div class="pill new"><span v-fit="25">New</span><Ico n="wand" :s="16" /></div>
          <div class="pill pe"><span v-fit="44">Preview</span><b><span v-fit="22">Edit</span></b></div>
          <div class="pill as"><i /><span v-fit="67">DaniilFolder</span><u>#</u></div>
          <div class="right">
            <div class="pill pic"><Ico n="person" :s="14" /><Ico n="search" :s="16" /></div>
            <div class="pill save"><span v-fit="28">Save</span></div>
          </div>
        </div>
        <div class="panelTop">
          <div v-for="(t, k) in tabs" :key="t.t" class="ptab">
            <div class="pi">
              <svg v-if="t.n === 'chain'" width="94" height="50" viewBox="0 0 94 50" fill="none" stroke="#131313" stroke-width="4"><rect x="4" y="18" width="13" height="31" rx="6.500" transform="rotate(22 10 33)" /><rect x="14" y="12" width="32" height="12" rx="6" transform="rotate(-14 30 18)" /><rect x="41" y="10" width="13" height="26" rx="6.500" transform="rotate(-15 47 23)" /><rect x="48" y="26" width="28" height="12" rx="6" transform="rotate(-20 62 32)" /><rect x="74" y="1" width="14" height="36" rx="7" transform="rotate(15 81 19)" /></svg>
              <Ico v-else :n="t.n" :w="t.iw" :h="t.ih" />
            </div>
            <span v-fit="t.w" :class="{ cur: k === 0 }">{{ t.t }}</span>
          </div>
          <i class="notch" />
        </div>
        <div class="setimg sR">
          <label v-fit="69">Set Image:</label>
          <div>
            <div class="pick"><Ico n="search" :s="14" /><span v-fit="250">Enter an ID or click select to find an asset...</span><b><span v-fit="36">Select</span></b></div>
            <p v-fit="435">This asset has no related image applied. Select a new image or thumbnail asset.</p>
          </div>
        </div>

        <div class="dlg dlgR">
          <div class="dhead">
            <Ico n="photo" :w="54" :h="48" class="ph" />
            <div class="dtxt"><h1 v-fit="54">Image</h1><p v-fit="436">Upload an image. You may only upload files of type gif, jpg, jpeg and png.</p></div>
            <span class="x"><Ico n="ex" :w="9" :h="11" /></span>
          </div>
          <div class="dbody">
            <aside>
              <div class="add"><b>+</b><span v-fit="56">Add more</span></div>
              <div class="na"><span v-fit="61">New Asset</span><Ico n="minus" :s="16" /></div>
            </aside>
            <main>
              <h2><span v-fit="54">Details</span></h2>
              <div class="cols">
                <div class="c1">
                  <label><span v-fit="65">Upload File</span><Ico n="star" :s="13" class="req" /></label>
                  <div class="file1"><span class="cf"><span v-fit="68">Choose File</span></span><span v-fit="80">No file chosen</span></div>
                  <small v-fit="72">No file selected</small>
                  <label class="g"><span v-fit="78">Enter a name</span><Ico n="star" :s="13" class="req" /></label>
                  <div class="inp" />
                  <small v-fit="118">Friendly name for the file</small>
                  <label class="g two"><div><span v-fit="45">Alt Text</span><Ico n="star" :s="13" class="req" /></div><span v-fit="94">Decorative only?</span></label>
                  <div class="two"><div><div class="inp" /></div><div class="tog"><span>Yes</span><b>No</b></div></div>
                  <small class="last" v-fit="249">The text to be used in the Alt attribute of the IMG tag</small>
                </div>
                <div class="c2">
                  <label><span v-fit="44">Caption</span></label>
                  <div class="area"><i class="rs" /></div>
                  <small class="ln f"><span v-fit="256">Some text to be associated with the image and can be</span></small>
                  <small class="ln"><span v-fit="222">accessed and printed out separately if required</span></small>
                  <label class="sm"><span v-fit="89">Show in menu?</span></label>
                  <div class="tog y"><b>Yes</b><span>No</span></div>
                  <small v-fit="174">This option will affect all link locations</small>
                </div>
              </div>
              <h2 class="h2b"><span v-fit="130">Create locations</span></h2>
              <label class="loc"><span v-fit="260">Select the locations to create this asset under</span><Ico n="star" :s="13" class="req" /></label>
              <div class="lrow"><div class="lbox"><Ico n="gold" :w="26" :h="22" /><span v-fit="68">DaniilFolder</span><Ico n="minus" :s="16" class="mi" /></div><button><span v-fit="114">Select New Location</span></button></div>
            </main>
          </div>
          <footer><button><span v-fit="28">Back</span></button><button class="dark"><span v-fit="38">Create</span></button></footer>
        </div>
      </div>
      <div class="w8bar">
        <div class="win"><Ico n="win8" :w="26" :h="26" /></div>
        <div v-for="t in w8" :key="t.n" class="w8c" :class="t.c"><Ico :n="t.n" :s="t.z" /></div>
      </div>
    </section>
  </div>
</template>

<style>
body { background: #191919; overflow: hidden; }
</style>
<style scoped>
* { box-sizing: border-box; }
.desk { display: flex; width: 3840px; height: 1080px; font-family: "Open Sans", "Noto Sans", sans-serif; font-size: 13px; color: #111; background: #191919; overflow: hidden; line-height: 1.2; }
.desk span, .desk p, .desk em, .desk small, .desk label { white-space: nowrap; }
p, h1, h2 { margin: 0; font-weight: 400; }
i, u { font-style: normal; text-decoration: none; }
.defs { position: absolute; }
.monitor { width: 1920px; height: 1080px; display: flex; flex-direction: column; flex: none; }

.tvbar { height: 23px; background: #ebebeb; display: grid; grid-template-columns: 1fr auto 1fr; align-items: center; padding-left: 3px; font-size: 15px; color: #222; }
.tvbtns, .cb { display: flex; justify-content: flex-end; height: 23px; padding-right: 3px; }
.tvbtns b, .cb b { width: 45px; height: 19px; background: #bcbcbc; color: #fff; display: flex; align-items: center; justify-content: center; }
.min { width: 9px; height: 2px; background: #222; margin: 11px 16px 0 0; }
.rest { width: 9px; height: 8px; border: 1px solid #222; border-top-width: 2px; margin: 6px 11px 0 0; box-shadow: 2px -2px 0 -1px #ebebeb, 2px -2px 0 0 #222; }

.remote { position: relative; margin: 1px 56px 0; width: 1808px; height: 1016px; display: flex; flex-direction: column; overflow: hidden; }
.fftitle { height: 37px; background: linear-gradient(#98b4d2, #b7cfea); border-top: 1px solid #dfeaf5; border-bottom: 1px solid #8ba5c0; display: flex; justify-content: flex-end; gap: 2px; padding: 1px 2px 0 0; }
.wbtn, .fx { width: 37px; height: 20px; border: 1px solid #5f7b98; border-radius: 2px; background: linear-gradient(#cfdff0, #a5bedb 50%, #93b0d1 50%, #b2cbe6); display: flex; align-items: center; justify-content: center; box-shadow: inset 0 0 0 1px #ffffff66; }
.m { width: 12px; height: 5px; background: #fff; border: 1px solid #555; margin-top: 6px; }
.r { width: 9px; height: 9px; border: 2px solid #fff; outline: 1px solid #555; box-shadow: 4px -3px 0 0 #e6edf5; }
.red, .fx { background: linear-gradient(#e5a091, #cf6a55 50%, #b8321c 50%, #cc5940); border-color: #5b2822; }
.fftools { height: 76px; padding-top: 10px; background: linear-gradient(#e9f2fc, #d8e8f8 50%); display: flex; align-items: flex-start; color: #4d5863; }
.url { width: 998px; height: 27px; background: #fbfdff; border: 1px solid #b4c3d2; border-radius: 2px; display: flex; justify-content: flex-end; align-items: center; gap: 8px; padding-right: 7px; color: #9aa5b0; }
.green { margin: -1px 0 0 4px; }
.green svg { border-radius: 2px; }
.ffsearch { margin-left: 11px; width: 339px; height: 28px; background: #fff; border: 1px solid #b4c3d2; border-radius: 2px; display: flex; align-items: center; gap: 7px; padding-left: 7px; color: #8b939b; }
.ffsearch em { color: #5a6169; font-size: 13px; }
.fft { height: 28px; display: flex; align-items: center; justify-content: center; }
.fft.sep { border-right: 1px solid #b3c2d2; }

.page { position: relative; flex: 1; background: #232323; font-family: "Liberation Sans", Arial, sans-serif; }
.pbar { height: 38px; background: linear-gradient(#0b0b0b, #000 60%); display: flex; align-items: center; box-shadow: 0 2px 6px #0009; color: #2c2c2c; }
.pbarL { justify-content: flex-end; gap: 12px; padding-right: 15px; border-top: 1px solid #000; height: 37px; }
.pill { height: 25px; border: 1px solid #0e0e0e; border-radius: 13px; background: #030303; display: flex; align-items: center; justify-content: center; font-size: 12px; color: #292929; overflow: hidden; }
.pic { width: 74px; gap: 20px; color: #242424; }
.save { width: 82px; color: #151515; }
.panelTop { margin: 14px 15px 0; height: 111px; border-radius: 6px; background: #262626; border: 1px solid #1e1e1e; box-shadow: 0 0 3px #0003; }
.setimg { position: absolute; border: 1px solid #1e1e1e; background: #252525; display: flex; align-items: flex-start; font-size: 13px; color: #080808; }
.sL { left: 546px; top: 170px; width: 718px; height: 482px; padding: 371px 0 0 41px; }
.setimg label { display: block; width: 116px; padding-top: 1px; font-size: 14px; }
.pick { display: flex; align-items: center; width: 383px; height: 27px; border: 1px solid #161616; border-radius: 3px; background: #202020; padding-left: 13px; gap: 8px; color: #0a0a0a; overflow: hidden; }
.pick svg { color: #0d1c33; }
.pick b { margin-left: auto; width: 76px; height: 27px; background: linear-gradient(#0d1729, #060c18); display: flex; align-items: center; padding-left: 14px; color: #2a2e36; }
.pick > span { font-size: 12px; }
.setimg p { margin-top: 18px; font-size: 12px; color: #0d0d0d; }

.w7bar { height: 44px; border-top: 1px solid #5a6b7c; box-shadow: inset 0 1px 0 #c6dcf2; background: linear-gradient(90deg, #7f95ab 40px, #a5bfdd 160px); display: flex; align-items: center; }
.orb { width: 66px; padding-left: 11px; }
.w7c { height: 43px; display: flex; align-items: center; justify-content: center; flex: none; }
.w7c.on { background: linear-gradient(135deg, #e4edf7, #b8cce4 60%, #c8d9ec); border: 1px solid #5c7694; border-radius: 2px; box-shadow: inset 0 0 0 1px #fff9; margin-right: 1px; }
.w7c.on:nth-child(5) { background: #edf2f8; }
.w7c.hot { background: linear-gradient(#fbe48a, #f0a24c 60%, #e88b3c); border: 1px solid #6f6a55; border-right: 6px double #b9c7d8; border-radius: 2px; box-shadow: inset 0 0 0 1px #fff9; }
.w7tray { margin-left: auto; height: 43px; display: flex; align-items: center; gap: 12px; padding-left: 30px; background: linear-gradient(90deg, #a5bfdd00, #8499b0 30px, #7d92a9); color: #fff; width: 278px; justify-content: flex-end; }
.clock { display: flex; flex-direction: column; align-items: center; color: #fff; font-size: 12.5px; }
.w7tray .clock { gap: 5px; width: 92px; }
.w7tray .clock span { font-size: 14px; line-height: 16px; }
.peek { width: 13px; height: 42px; border: 1px solid #c2d0de; background: linear-gradient(#4a5a6c, #8598ad); margin-left: -8px; }

.w8bar { height: 40px; background: #44565e; border-top: 1px solid #33444b; display: flex; gap: 4px; align-items: center; position: relative; flex: none; }
.win { width: 48px; padding-left: 12px; }
.w8c { width: 58px; height: 38px; display: flex; align-items: center; justify-content: center; flex: none; }
.run { background: #66747b; border: 1px solid #98a3a8; }
.act { background: linear-gradient(#8d989d, #a9b2b6); border: 1px solid #f0f3f4; width: 52px; margin-right: 6px; box-shadow: 3px 0 0 -1px #a9b2b6, 3px 0 0 0 #e6eaec, 6px 0 0 -1px #a9b2b6, 6px 0 0 0 #e6eaec; }
.dbl { width: 54px; margin-right: 4px; box-shadow: 4px 0 0 -1px #55656c, 4px 0 0 0 #98a3a8; }
.tray { margin-left: auto; display: flex; align-items: center; gap: 9px; color: #fff; padding-right: 19px; }
.tray .up { margin-right: 3px; }
.tray .clock { margin-left: 8px; gap: 2px; font-size: 12px; }
.tray > span { font-size: 12px; margin-left: 5px; }
.tray .clock span { line-height: 15px; }

.dlg { position: absolute; background: #fff; border-radius: 9px; box-shadow: 0 2px 12px #000; font-size: 12.5px; color: #222; font-family: "Liberation Sans", Arial, sans-serif; }
.dlgL { left: 480px; top: 118px; width: 838px; height: 519px; padding: 5px; }
.dlgR { left: 510px; top: 5px; width: 890px; height: 550px; padding: 5px 5px 5px 6px; }
.dhead { position: relative; height: 77px; border-radius: 8px; background: linear-gradient(#424242, #000 88%); border: 1px solid #333; display: flex; }
.dlgL .dhead { height: 73px; }
.dtxt { font-size: 12px; font-family: "Noto Sans", "Open Sans", sans-serif; color: #4b8ae8; }
.dlgL .dtxt { padding: 30px 0 0 101px; }
.ph { margin: 12px 0 0 19px; }
.dlgR .dtxt { padding: 6px 0 0 17px; }
.dtxt h1 { font: bold 18px/22px "Liberation Sans", Arial, sans-serif; color: #fff; }
.dlgR .dtxt p { margin-top: 4px; font-size: 12.5px; }
.x { position: absolute; right: 5px; top: 5px; width: 20px; height: 20px; border: 1px solid #8a8a8a; border-radius: 50%; background: #222; color: #fff; display: flex; align-items: center; justify-content: center; }
.dbody { display: flex; gap: 4px; margin-top: 5px; height: 429px; }
.dlgL .dbody { height: 405px; gap: 5px; }
aside { width: 185px; border: 1px solid #ddd; border-radius: 10px; padding: 7px 0 0; }
.dlgL aside { width: 174px; }
main { flex: 1; background: #eee; border: 1px solid #ddd; border-radius: 10px; padding: 0 10px; }
h2 { height: 35px; margin-top: 1px; padding-top: 9px; border-bottom: 2px solid #ccc; font-size: 17px; line-height: 24px; color: #1c1c1c; }
.dlgL h2 { margin-top: 0; height: 34px; }
.cols { display: flex; height: 238px; }
.dlgL .cols { height: 232px; }
.c1 { width: 341px; border-right: 1px solid #e0e0e0; display: flex; flex-direction: column; align-items: flex-start; }
.dlgL .c1 { width: 320px; padding-top: 156px; }
.c2 { padding-left: 10px; display: flex; flex-direction: column; align-items: flex-start; }
.desk .dlg label { height: 30px; display: flex; align-items: center; gap: 4px; flex: none; }
.req { color: #c00; }
.file1 { display: flex; height: 32px; align-items: center; gap: 5px; padding-left: 4px; }
.cf { border: 1px solid #5c86c8; box-shadow: 0 0 0 1px #a9c4ee; border-radius: 2px; height: 21px; padding: 0 7px; background: linear-gradient(#f8f8f8, #ddd); display: flex; align-items: center; }
small { font-size: 10.5px; line-height: 18px; color: #888; padding-left: 2px; flex: none; }
.g { margin-top: 5px; margin-bottom: 1px; }
.two { display: flex; align-items: center; }
.two > :first-child { width: 166px; display: flex; align-items: center; gap: 4px; }
.g.two { margin-bottom: 0; }
div.two > :first-child { width: 170px; }
.inp { width: 156px; height: 23px; background: #fff; border: 1px solid #bbb; box-shadow: inset 0 1px 1px #ccc; }
.last { margin-top: 1px; }
.area { position: relative; width: 206px; height: 36px; margin-top: 1px; background: #fff; border: 1px solid #bbb; }
.dlgL .area { width: 195px; height: 54px; margin-top: 0; }
.rs { position: absolute; right: 1px; bottom: 1px; width: 8px; height: 8px; background: repeating-linear-gradient(135deg, #0000 0 3px, #777 3px 4px); clip-path: polygon(100% 0, 100% 100%, 0 100%); }
.ln { line-height: 12px; }
.dlgL .ln { line-height: 13px; }
.ln.f { margin-top: 3px; }
.sm { margin-top: 16px; }
.tog { display: flex; align-items: center; width: 94px; height: 23px; border: 1px solid #ccc; border-radius: 3px; background: linear-gradient(#fff, #eee); font: 11.5px "Noto Sans", "Open Sans", sans-serif; }
.tog b { width: 33px; height: 25px; line-height: 23px; background: #cbe3f4; border: 1px solid #6db6e4; box-shadow: 0 0 4px #58aee6, inset 0 0 3px #58aee6; text-align: center; color: #2c3e4c; flex: none; }
.tog span { width: 48px; text-align: center; flex: none; }
.tog.y { margin: 9px 0 4px; padding-left: 6px; }
.tog.y span { width: 50px; padding-left: 8px; }
.dlgL .tog { width: 89px; }
.dlgL .c1 .tog { margin-left: 158px; }
.dlgL .c1 .tog span { width: 45px; }
.dlgL .tog.y { margin: 6px 0 3px; height: 22px; }
.dlgL .tog.y span { width: 47px; padding-left: 7px; }
.desk .dlgL .deco { margin-left: 161px; }
.h2b { margin-top: 0; height: 36px; padding-top: 10px; }
.dlgL .h2b { height: 36px; }
.dlgL .loc { height: 27px; padding-bottom: 1px; }
.lrow { display: flex; align-items: center; font-size: 12px; }
.lbox { width: 300px; height: 33px; background: #fff; border-bottom: 1px dotted #777; display: flex; align-items: center; padding: 0 8px 0 7px; gap: 7px; margin-right: 24px; font-size: 12.5px; }
.lbox .mi { margin-left: auto; }
.dlgL .lbox { width: 283px; height: 32px; background: none; border-top: 1px dotted #777; margin-right: 20px; }
button { height: 23px; padding: 0; width: 147px; border: 1px solid #a2a2a2; border-radius: 12px; background: linear-gradient(#f6f6f6, #c4c4c4); box-shadow: 0 1px 3px #0005; color: #555; font: 11px "Noto Sans", "Open Sans", sans-serif; flex: none; text-shadow: 0 1px 0 #fff; }
.dlgL button { width: 138px; font-size: 10.5px; height: 22px; }
.or { margin: 0 10px 0 9px; }
.dlgL .cur { width: 141px; }
footer { display: flex; justify-content: space-between; padding: 5px 4px; }
footer button, .dlgL footer button { width: 60px; }
.dlgL footer button { width: 57px; }
footer button.dark, .dlgL footer button.dark { width: 70px; background: linear-gradient(#9a9a9a, #5c5c5c); color: #fff; border-color: #555; text-shadow: 0 -1px 0 #333; font-weight: 600; }
.dlgL footer button.dark { width: 67px; }
.add { margin: 0 4px; height: 23px; border: 1px solid #ccc; background: #f1f1f1; border-radius: 2px; display: flex; align-items: center; justify-content: center; gap: 4px; color: #777; font-size: 13px; }
.add b { font-size: 15px; }
.na { margin-top: 4px; height: 28px; background: linear-gradient(#93b9f8, #87b0f0 40%, #5a8bd2); border-bottom: 1px solid #ccc; display: flex; align-items: center; justify-content: space-between; padding: 0 4px 0 6px; color: #fff; }

.fd { position: absolute; left: 0; top: 0; width: 904px; height: 565px; border: 1px solid #0a0a0a; box-shadow: inset 0 0 0 1px #3fd0e8; padding: 0 7px 0 8px; border-radius: 5px 5px 0 0; background: linear-gradient(#9ab5d2, #b9d2ee 70px, #b9cfe8); }
.fdt { height: 38px; display: flex; align-items: center; gap: 5px; padding: 3px 2px 0 2px; color: #1a1a1a; }
.fdt span { font-size: 13px; }
.fx { margin-left: auto; height: 21px; }
.fda { height: 33px; display: flex; align-items: center; }
.nb { width: 29px; height: 29px; border: 2px solid #5f6f80; border-radius: 50%; background: linear-gradient(#dbe3eb, #b7c5d3 50%, #c7d6e5); display: flex; align-items: center; justify-content: center; color: #eef3f8; margin: 0 1px 0 3px; }
.nb + .nb { margin-left: 4px; }
.nd { color: #dfe9f4; margin: 0 3px 0 2px; }
.addr { width: 608px; height: 26px; border: 1px solid #8096ae; background: #eef4fb; display: flex; align-items: center; padding-left: 4px; box-shadow: 0 0 0 1px #ffffff55; }
.addr span { margin-left: 5px; }
.ar { border: 5px solid #0000; border-left-color: #000; margin-left: 12px; }
.dn { margin-left: auto; margin-right: 6px; color: #123; }
.rf { width: 27px; height: 24px; border-left: 1px solid #9fb2c6; display: flex; align-items: center; justify-content: center; }
.fs { margin-left: 5px; width: 191px; height: 26px; border: 1px solid #8096ae; background: #f1f6fc; display: flex; align-items: center; justify-content: space-between; padding: 0 5px 0 9px; color: #2c62ae; }
.fs em { color: #777; }
.fdc { height: 38px; background: linear-gradient(#fbfdff, #e6effa 45%, #dbe5f3 50%, #dee8f5); border-bottom: 1px solid #9fb5cf; display: flex; align-items: center; padding-left: 20px; color: #1e395b; }
.fdc > svg { margin-left: 6px; }
.nf { margin-left: 33px; }
.fdr { margin-left: auto; display: flex; align-items: center; padding-right: 17px; gap: 10px; }
.fdr svg:nth-child(3) { margin-left: 15px; }
.fdr svg:nth-child(4) { margin-left: 13px; }
.fdb { height: 356px; background: #fcfcfc; display: flex; overflow: hidden; }
.nav { width: 166px; padding-top: 7px; overflow: hidden; }
.nr { height: 25.5px; display: flex; align-items: center; gap: 6px; padding-left: 30px; flex: none; }
.nr.top { padding-left: 20px; }
.sb { width: 18px; background: #f1f1f1; border-left: 1px solid #e3e3e3; display: flex; flex-direction: column; align-items: center; padding-top: 5px; color: #444; flex: none; }
.sb i { width: 17px; height: 151px; margin: 7px 0 auto; border: 1px solid #979797; border-radius: 2px; background: linear-gradient(90deg, #f5f5f5, #e6e6e6 45%, #cfcfcf); display: grid; place-items: center; }
.sb i::after { content: ""; width: 8px; height: 9px; background: repeating-linear-gradient(#555 0 1px, #f5f5f5 1px 2px, #0000 2px 4px); }
.s2 i { height: 94px; }
.sb svg:last-child { margin-bottom: 6px; }
.files { flex: 1; margin-left: 2px; border-left: 1px solid #c9dcf0; padding: 4px 0 0 18px; display: grid; grid-template: 67px 67px 70px 69px 70px / 299px 294px; }
.file { display: flex; align-items: center; padding-left: 5px; gap: 7px; font-size: 13px; }
.file p { height: 19.700px; line-height: 19.700px; color: #777; }
.file p:first-child { color: #111; }
.file.hot { border: 1px solid #b4d3f2; border-radius: 3px; margin: 3px 0; padding-left: 4px; background: linear-gradient(#fcfdff, #eaf3fc); }
.fdf { height: 91px; background: #f0f0f0; padding-top: 12px; }
.r1 { display: flex; align-items: center; justify-content: flex-end; padding-right: 19px; }
.fn { width: 449px; height: 28px; margin: 0 11px 0 6px; background: #fff; border: 1px solid #a9cbe6; border-top-color: #4c86b8; display: flex; align-items: center; justify-content: flex-end; padding-right: 5px; }
.ft, .open, .can { background: linear-gradient(#f2f2f2, #ebebeb 50%, #ddd 50%, #cfcfcf); border: 1px solid #777; border-radius: 3px; display: flex; align-items: center; }
.ft { width: 200px; height: 27px; justify-content: space-between; padding: 0 5px 0 4px; }
.r2 { display: flex; justify-content: flex-end; gap: 13px; padding: 5px 20px 0 0; }
.open, .can { height: 32px; width: 93px; justify-content: center; }
.open { border: 1px solid #2c8fc0; box-shadow: inset 0 0 0 1px #48c4ee; padding-left: 20px; justify-content: space-between; }
.open i { border-left: 1px solid #555; height: 26px; width: 17px; display: flex; align-items: center; justify-content: center; }
.grip { position: absolute; right: 9px; bottom: 8px; width: 11px; height: 11px; background: radial-gradient(#aaa 1px, #0000 1.300px) 0 0 / 4px 4px; clip-path: polygon(100% 0, 100% 100%, 0 100%); }
.cursor { position: absolute; left: 536px; top: 276px; }
.tip { position: absolute; left: 709px; top: 296px; width: 473px; height: 43px; border: 1px solid #666; border-radius: 2px; background: linear-gradient(#fff, #e4e5f0); padding: 2px 5px; line-height: 19px; color: #575757; box-shadow: 2px 2px 3px #0005; }

.tabs { position: relative; height: 24px; background: #84b1c4; border-bottom: 1px solid #5b8798; display: flex; flex: none; }
.spy { margin: 1px 0 0 6px; }
.tab { position: relative; width: 202px; margin-left: 9px; display: flex; align-items: center; padding-left: 17px; font-size: 12px; color: #333; height: 25px; }
.tabbg { position: absolute; left: 0; top: 0; }
.tab > *:not(.tabbg) { position: relative; }
.tab span { margin-left: 5px; }
.tx { margin-left: 8px; color: #555; }
.newtab { width: 29px; height: 15px; margin: 5px 0 0 1px; background: #b9cdd6; border: 1px solid #7299a9; transform: skewX(18deg); border-radius: 3px; }
.cb { margin-left: auto; color: #222; }
.cb b { background: #c75050; }
.cb .rest { box-shadow: 2px -2px 0 -1px #84b1c4, 2px -2px 0 0 #222; margin-right: 9px; }
.ctools { height: 37px; background: linear-gradient(#fbfbfb, #e2e2e2); border-bottom: 2px solid #a8a8a8; display: flex; align-items: center; padding-left: 10px; gap: 14px; flex: none; }
.d { color: #555; }
.l { color: #bbb; }
.omni { width: 1728px; height: 27px; margin: 0 4px 0 -1px; border: 1px solid #aaa; border-radius: 2px; background: #fff; display: flex; align-items: center; padding: 0 5px 0 6px; font-size: 15.500px; color: #888; }
.omni .dom { color: #111; margin-left: 7px; }
.bk { margin-left: auto; color: #888; }
.ctools > svg:nth-last-child(2) { margin-left: -9px; }
.mn { color: #555; margin-left: 5px; }
.pR { overflow: hidden; }
.pR .pbar { padding-left: 16px; }
.sq { font: 400 23px Lato, sans-serif; color: #2b2b2b; }
.mx { font: 900 22px "Liberation Sans", sans-serif; color: #0b1628; margin-left: 6px; }
.new { width: 67px; margin-left: 23px; background: #07101e; gap: 4px; font-weight: 700; }
.pe { width: 154px; margin-left: 8px; justify-content: flex-start; padding-left: 24px; font-weight: 700; }
.pe b { margin-left: auto; width: 66px; height: 25px; background: #07101e; display: flex; align-items: center; padding-left: 21px; }
.as { width: 200px; margin-left: 8px; justify-content: flex-start; padding-left: 9px; font-weight: 700; }
.as i { width: 11px; height: 11px; border-radius: 50%; background: #14201e; margin-right: 10px; box-shadow: 0 0 4px #1c2e2c; }
.as u { margin-left: 4px; color: #0b1830; }
.right { margin-left: auto; display: flex; gap: 11px; padding-right: 15px; }
.right .pic { width: 81px; }
.right .save { width: 90px; }
.pR .panelTop { position: relative; margin: 16px 15px 0 16px; height: 118px; display: flex; padding-left: 6px; }
.ptab { width: 110px; height: 100%; display: flex; flex-direction: column; align-items: center; font-size: 12.5px; color: #060606; flex: none; }
.ptab + .ptab .pi { border-left: 1px solid #1c1c1c; }
.pi { margin-top: 16px; width: 110px; height: 58px; display: flex; align-items: center; justify-content: center; }
.ptab > span { margin-top: 10px; }
.cur { font-weight: 700; }
.dlgL .cur { font-weight: 400; }
.notch { position: absolute; left: 47px; bottom: -11px; width: 22px; height: 22px; background: #262626; border: 1px solid #1e1e1e; border-width: 0 1px 1px 0; transform: rotate(45deg); }
.sR { left: 579px; top: 198px; width: 762px; height: 479px; padding: 373px 0 0 45px; }
.sR label { width: 122px; }
.sR .pick { width: 407px; height: 28px; }
.sR .pick b { width: 81px; height: 28px; }
.sR p { margin-top: 20px; }
</style>
